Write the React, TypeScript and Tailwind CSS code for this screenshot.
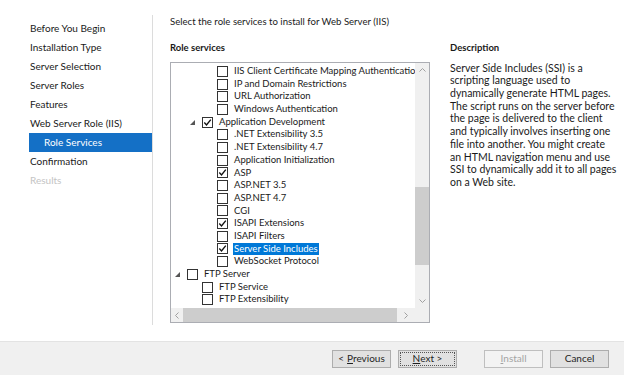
import React from "react";

type Row = { level: number; text: string; checked?: boolean; expanded?: boolean; selected?: boolean };

const rows: Row[] = [
  { level: 3, text: "IIS Client Certificate Mapping Authentication" },
  { level: 3, text: "IP and Domain Restrictions" },
  { level: 3, text: "URL Authorization" },
  { level: 3, text: "Windows Authentication" },
  { level: 2, text: "Application Development", checked: true, expanded: true },
  { level: 3, text: ".NET Extensibility 3.5" },
  { level: 3, text: ".NET Extensibility 4.7" },
  { level: 3, text: "Application Initialization" },
  { level: 3, text: "ASP", checked: true },
  { level: 3, text: "ASP.NET 3.5" },
  { level: 3, text: "ASP.NET 4.7" },
  { level: 3, text: "CGI" },
  { level: 3, text: "ISAPI Extensions", checked: true },
  { level: 3, text: "ISAPI Filters" },
  { level: 3, text: "Server Side Includes", checked: true, selected: true },
  { level: 3, text: "WebSocket Protocol" },
  { level: 1, text: "FTP Server", expanded: true },
  { level: 2, text: "FTP Service" },
  { level: 2, text: "FTP Extensibility" },
];

const navItems = [
  "Before You Begin",
  "Installation Type",
  "Server Selection",
  "Server Roles",
  "Features",
  "Web Server Role (IIS)",
];

const Checkbox = ({ checked }: { checked?: boolean }) => (
  <span className="w-[11px] h-[11px] border border-[#333333] bg-white flex items-center justify-center shrink-0">
    {checked && (
      <svg width="9" height="9" viewBox="0 0 9 9">
        <path d="M1.3 4.6 L3.5 6.9 L7.8 1.6" fill="none" stroke="#111" strokeWidth="1.4" />
      </svg>
    )}
  </span>
);

const TreeRow = ({ row }: { row: Row }) => {
  const pad = ["pl-0", "pl-[15px]", "pl-[30px]"][row.level - 1];
  return (
    <div className={`h-[12.7px] flex items-center whitespace-nowrap ${pad}`}>
      <span className="w-[16px] h-full flex items-center pl-[4px] shrink-0">
        {row.expanded && (
          <svg width="5" height="5" viewBox="0 0 5 5">
            <polygon points="5,0 5,5 0,5" fill="#555555" />
          </svg>
        )}
      </span>
      <Checkbox checked={row.checked} />
      <span
        className={
          row.selected
            ? "ml-[5px] px-[1px] bg-[#0078d7] text-white leading-[12.7px]"
            : "ml-[6px] leading-[12.7px]"
        }
      >
        {row.text}
      </span>
    </div>
  );
};

const Btn = ({ children, disabled, focus }: { children: React.ReactNode; disabled?: boolean; focus?: boolean }) => (
  <div
    className={
      disabled
        ? "w-[59px] h-[18px] border border-[#bfbfbf] bg-[#f3f3f3] text-[#a3a3a3] flex items-center justify-center"
        : "w-[59px] h-[18px] border border-[#adadad] bg-[#e1e1e1] text-[#1f1f1f] flex items-center justify-center"
    }
  >
    {focus ? (
      <span className="w-[55px] h-[14px] border border-dotted border-[#555] flex items-center justify-center">
        {children}
      </span>
    ) : (
      children
    )}
  </div>
);

export default function App() {
  return (
    <div
      className="w-[624px] h-[375px] bg-white flex flex-col text-[9.5px] text-[#1a1a1a] overflow-hidden"
      style={{ fontFamily: 'Lato, "Noto Sans", sans-serif' }}
    >
      <div className="flex-1 flex">
        <div className="w-[153px] shrink-0 pt-[15px] pb-[16px] text-[10px]">
          <div className="h-full border-r border-[#dcdcdc] pl-[29px] pt-[3.5px]">
            {navItems.map((t) => (
              <div key={t} className="h-[19px] leading-[19px] pl-[1px]">
                {t}
              </div>
            ))}
            <div className="h-[19px] leading-[19px] pl-[15px] bg-[#1470c6] text-white">Role Services</div>
            <div className="h-[19px] leading-[19px] pl-[1px]">Confirmation</div>
            <div className="h-[19px] leading-[19px] pl-[1px] text-[#c4c4c4]">Results</div>
          </div>
        </div>

        <div className="flex-1 pl-[17px] pt-[15px] flex flex-col">
          <div className="leading-[14px] text-[9.6px]">Select the role services to install for Web Server (IIS)</div>
          <div className="flex gap-[20px] mt-[12px]">
            <div className="flex flex-col">
              <div className="leading-[14px] font-bold">Role services</div>
              <div className="mt-[7px] w-[260px] h-[261px] border border-[#abadb3] flex flex-col">
                <div className="flex-1 flex min-h-0">
                  <div className="flex-1 overflow-hidden pt-[2px]">
                    {rows.map((r) => (
                      <TreeRow key={r.text} row={r} />
                    ))}
                  </div>
                  <div className="w-[14px] bg-[#f0f0f0] flex flex-col items-center shrink-0">
                    <div className="h-[14px] flex items-center justify-center">
                      <svg width="7" height="4" viewBox="0 0 7 4">
                        <path d="M0.5 3.5 L3.5 0.5 L6.5 3.5" fill="none" stroke="#a0a0a0" />
                      </svg>
                    </div>
                    <div className="w-full flex-1 flex flex-col">
                      <div className="h-[110px]" />
                      <div className="h-[78px] w-full bg-[#cdcdcd]" />
                    </div>
                    <div className="h-[14px] flex items-center justify-center">
                      <svg width="7" height="4" viewBox="0 0 7 4">
                        <path d="M0.5 0.5 L3.5 3.5 L6.5 0.5" fill="none" stroke="#a0a0a0" />
                      </svg>
                    </div>
                  </div>
                </div>
                <div className="h-[14px] flex shrink-0">
                  <div className="flex-1 bg-[#f0f0f0] flex items-center">
                    <div className="w-[12px] flex justify-center">
                      <svg width="4" height="7" viewBox="0 0 4 7">
                        <path d="M3.5 0.5 L0.5 3.5 L3.5 6.5" fill="none" stroke="#a0a0a0" />
                      </svg>
                    </div>
                    <div className="flex-1 h-full bg-[#cdcdcd]" />
                    <div className="w-[18px] flex justify-center">
                      <svg width="4" height="7" viewBox="0 0 4 7">
                        <path d="M0.5 0.5 L3.5 3.5 L0.5 6.5" fill="none" stroke="#a0a0a0" />
                      </svg>
                    </div>
                  </div>
                  <div className="w-[14px] bg-[#f0f0f0]" />
                </div>
              </div>
            </div>
            <div className="flex flex-col w-[168px]">
              <div className="leading-[14px] font-bold">Description</div>
              <div className="mt-[6.6px] leading-[12.7px] text-[10.5px]">
                Server Side Includes (SSI) is a scripting language used to dynamically generate HTML pages. The
                script runs on the server before the page is delivered to the client and typically involves
                inserting one file into another. You might create an HTML navigation menu and use SSI to
                dynamically add it to all pages on a Web site.
              </div>
            </div>
          </div>
        </div>
      </div>

      <div className="h-[34px] shrink-0 bg-[#f0f0f0] border-t border-[#e3e3e3] flex items-center justify-end pr-[15px] text-[10px]">
        <Btn>
          &lt; <u className="no-underline ml-[3px]"><span className="underline">P</span>revious</u>
        </Btn>
        <div className="ml-[7px]">
          <Btn focus>
            <span className="underline">N</span>ext &gt;
          </Btn>
        </div>
        <div className="ml-[27px]">
          <Btn disabled>
            <span className="underline">I</span>nstall
          </Btn>
        </div>
        <div className="ml-[7px]">
          <Btn>Cancel</Btn>
        </div>
      </div>
    </div>
  );
}
